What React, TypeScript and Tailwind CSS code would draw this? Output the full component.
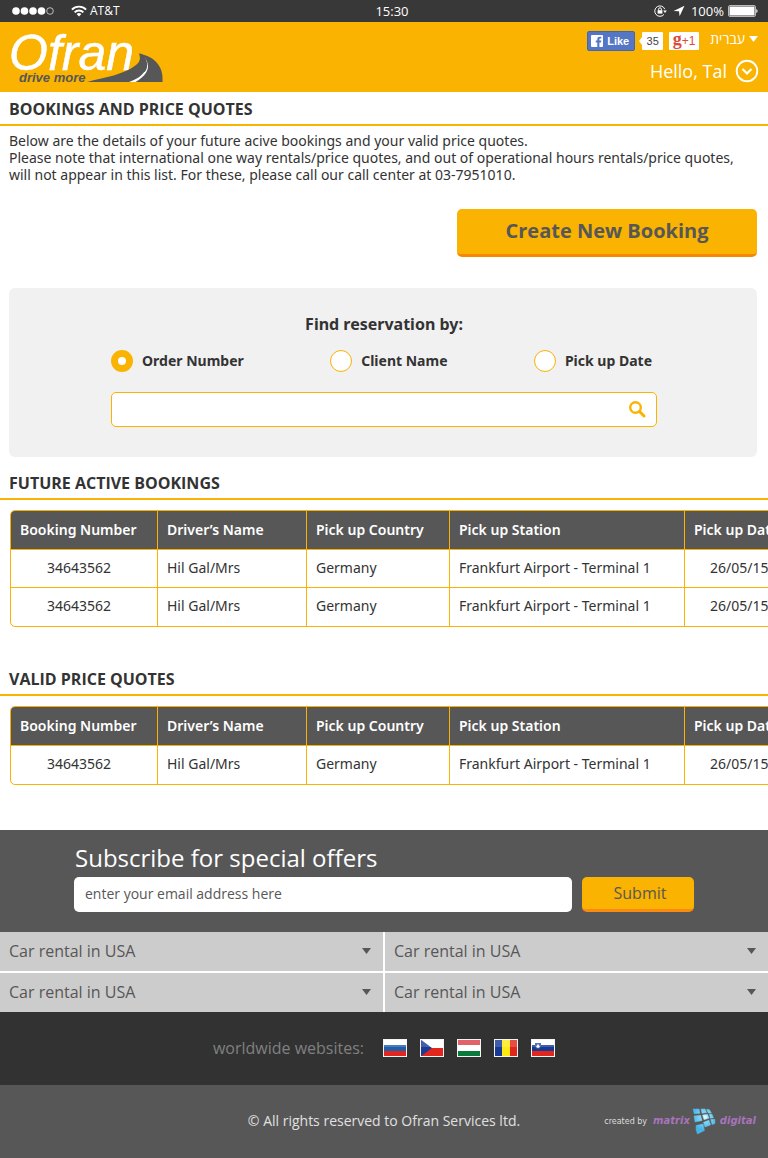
import React from "react";

const headings = ["Booking Number", "Driver’s Name", "Pick up Country", "Pick up Station", "Pick up Date"];
const booking = ["34643562", "Hil Gal/Mrs", "Germany", "Frankfurt Airport - Terminal 1", "26/05/15"];

function StatusBar() {
  return (
    <div className="grid h-[22px] grid-cols-3 items-center bg-[#383838] px-[10px] text-[13px] leading-none text-white">
      <div className="flex items-center pl-[2px]">
        <svg width="43" height="10" viewBox="0 0 43 10" aria-hidden="true">
          <g fill="#fff">
            <circle cx="4" cy="5" r="3.8" />
            <circle cx="12.5" cy="5" r="3.8" />
            <circle cx="21" cy="5" r="3.8" />
            <circle cx="29.5" cy="5" r="3.8" />
          </g>
          <circle cx="38" cy="5" r="3.3" fill="none" stroke="#ddd" strokeWidth="0.8" />
        </svg>
        <svg className="mr-[3px] ml-4" width="16" height="12" viewBox="0 0 16 12" fill="none" stroke="#fff" strokeWidth="1.9" aria-hidden="true">
          <path d="M0.9 4.6a10 10 0 0 1 14.2 0" />
          <path d="M3.6 7.3a6.2 6.2 0 0 1 8.8 0" />
          <path d="M8 11.6 5.6 9.1a3.4 3.4 0 0 1 4.8 0z" fill="#fff" stroke="none" />
        </svg>
        <span className="text-xs">AT&amp;T</span>
      </div>
      <span className="pl-4 text-center">15:30</span>
      <div className="flex items-center justify-end">
        <svg width="13" height="12" viewBox="0 0 13 12" fill="none" stroke="#fff" aria-hidden="true">
          <path d="M10.8 4.2A5.2 5.2 0 1 0 10 9.4" />
          <path d="M9.2 5.6h3.6L11 8z" fill="#fff" stroke="none" />
          <rect x="3.6" y="5.2" width="4.8" height="3.4" fill="#fff" stroke="none" />
          <path d="M4.6 5.4V4.2a1.4 1.4 0 0 1 2.8 0v1.2" />
        </svg>
        <svg className="mr-[6px] ml-[6px]" width="12" height="12" viewBox="0 0 12 12" fill="#fff" aria-hidden="true">
          <path d="M11.5 0.8 6.6 11.2 6 6.2 0.6 6z" />
        </svg>
        <span>100%</span>
        <svg className="ml-1" width="30" height="12" viewBox="0 0 30 12" aria-hidden="true">
          <rect x="0.5" y="0.5" width="27" height="11" rx="1.5" fill="none" stroke="#bbb" />
          <rect x="1.5" y="1.5" width="25" height="9" fill="#fff" />
          <path d="M28.3 4a2.2 2.2 0 0 1 0 4z" fill="#fff" />
        </svg>
      </div>
    </div>
  );
}

function Logo() {
  return (
    <a href="#" aria-label="Ofran drive more">
      <svg className="overflow-visible" width="164" height="60" viewBox="0 0 164 60">
        <text x="9" y="42" fontFamily="Liberation Sans, sans-serif" fontStyle="italic" fontSize="50" fill="#fff" stroke="#fff" strokeWidth="0.5">
          Ofran
        </text>
        <text x="19" y="54" fontFamily="Liberation Sans, sans-serif" fontStyle="italic" fontWeight="700" fontSize="13" fill="#575757">
          drive more
        </text>
        <path d="M87 54C102 50 116 48 128 42c10-5 14-9 11-16.500 1-.3 2 .2 3 .8 13 3 22 13 20.500 27.700z" fill="#575757" />
        <path d="M141.500 27c5 4 7 10 3.500 16-3 4-7 8-16 11h6.500c7-4 12-9 12.500-15 0-5-2-9-6.500-12z" fill="#fff" />
        <path d="M141 26.500c4 3.500 6 8 5 13-.5 2-1.200 3-2 4" fill="none" stroke="#575757" strokeWidth="1.800" />
      </svg>
    </a>
  );
}

function Header() {
  return (
    <header className="flex h-[70px] items-start justify-between bg-[#f9b300] pr-[9px] text-white">
      <div className="pt-[6px]">
        <Logo />
      </div>
      <div className="flex flex-col items-end">
        <div className="flex items-center pt-[9px] pr-px font-['Liberation_Sans',sans-serif]">
          <button className="flex h-5 w-12 items-center gap-1 rounded-[2px] border border-[#4267b2] bg-[#5476c4] pl-[3px] text-[11px] font-bold">
            <svg width="12" height="12" viewBox="0 0 12 12" aria-hidden="true">
              <rect width="12" height="12" rx="1" fill="#fff" />
              <path d="M6.300 12V7.400H4.800V5.400h1.500V4.200C6.300 2.500 7.300 1.700 8.700 1.700h1.600v1.900H9.200c-.6 0-.8.3-.8.8v1h1.900l-.3 2H8.400V12z" fill="#5476c4" />
            </svg>
            Like
          </button>
          <svg className="ml-1" width="3" height="8" viewBox="0 0 3 8" aria-hidden="true">
            <path d="M3 0v8L0 4z" fill="#fff" />
          </svg>
          <span className="flex h-[18px] w-[21px] items-center justify-center rounded-[1px] bg-white text-[11px] text-[#444]">35</span>
          <button className="ml-[6px] flex h-[18px] w-[30px] items-center justify-center rounded-[1px] bg-white text-[#dd4b39]">
            <span className="pb-1 font-['Liberation_Serif',serif] text-lg leading-none font-bold">g</span>
            <span className="text-xs">+1</span>
          </button>
          <button className="ml-[11px] flex items-center gap-1 pb-1 font-['Open_Sans','DejaVu_Sans',sans-serif] text-[14px] leading-4 font-medium">
            <span lang="he">עברית</span>
            <svg width="9" height="6" viewBox="0 0 9 6" aria-hidden="true">
              <path d="M0 0h9L4.500 6z" fill="#fff" />
            </svg>
          </button>
        </div>
        <button className="mt-2 flex items-center gap-2 text-lg leading-6">
          Hello, Tal
          <svg width="24" height="24" viewBox="0 0 24 24" fill="none" stroke="#fff" aria-hidden="true">
            <circle cx="12" cy="12" r="10.300" strokeWidth="1.900" />
            <path d="m7.500 10 4.500 4.500 4.500-4.500" strokeWidth="2.200" />
          </svg>
        </button>
      </div>
    </header>
  );
}

function SectionTitle({ children }: { children: React.ReactNode }) {
  return <h2 className="border-b-2 border-[#f9b300] px-[9px] pt-[6px] pb-1 text-base leading-[22px] font-bold text-[#333]">{children}</h2>;
}

function BookingsTable({ rows, label }: { rows: string[][]; label: string }) {
  return (
    <div className="overflow-x-auto pt-[10px] pl-[10px] [scrollbar-width:none]">
      <table aria-label={label} className="w-[840px] table-fixed border-separate border-spacing-0 overflow-hidden rounded-[5px] border border-[#f9b300] text-left font-['Noto_Sans',sans-serif] text-sm text-[#333]">
        <colgroup>
          <col className="w-[147px]" />
          <col className="w-[149px]" />
          <col className="w-[143px]" />
          <col className="w-[235px]" />
          <col />
        </colgroup>
        <thead>
          <tr>
            {headings.map((h) => (
              <th key={h} className="h-[39px] border-r border-b border-[#f9b300] bg-[#575757] px-[9px] font-semibold whitespace-nowrap text-white last:border-r-0">
                {h}
              </th>
            ))}
          </tr>
        </thead>
        <tbody className="[&>tr:last-child>td]:border-b-0">
          {rows.map((row, r) => (
            <tr key={r}>
              {row.map((cell, c) => (
                <td key={c} className="h-[38px] border-r border-b border-[#f9b300] px-[9px] pb-[2px] whitespace-nowrap first:pl-9 last:border-r-0 last:pl-[25px]">
                  {cell}
                </td>
              ))}
            </tr>
          ))}
        </tbody>
      </table>
    </div>
  );
}

function FindReservation() {
  return (
    <section className="mt-[31px] mr-[11px] ml-[9px] rounded-md bg-[#f1f1f1] pt-6 pr-6 pb-[30px] pl-[26px] font-['Noto_Sans',sans-serif] text-[#333]">
      <h3 className="text-center text-base leading-6 font-bold">Find reservation by:</h3>
      <form className="mx-auto mt-[14px] max-w-[546px]" onSubmit={(e) => e.preventDefault()}>
        <div className="flex justify-between pr-[5px] text-sm leading-[22px] font-bold">
          {["Order Number", "Client Name", "Pick up Date"].map((name, i) => (
            <label key={name} className="flex items-center gap-[9px]">
              <input
                type="radio"
                name="find"
                defaultChecked={i === 0}
                className="size-[22px] appearance-none rounded-full border border-[#f9b300] bg-white checked:border-[7px]"
              />
              {name}
            </label>
          ))}
        </div>
        <div className="mt-5 flex h-[35px] items-center rounded-[5px] border border-[#f9b300] bg-white">
          <input type="text" aria-label="Reservation search" className="min-w-0 flex-1 px-3 text-sm outline-none" />
          <button aria-label="Search" className="mr-[10px]">
            <svg width="17" height="17" viewBox="0 0 17 17" fill="none" stroke="#f9b300" aria-hidden="true">
              <circle cx="6.500" cy="6.500" r="5.300" strokeWidth="2.400" />
              <path d="m10.500 10.500 4.500 4.500" strokeWidth="3" strokeLinecap="round" />
            </svg>
          </button>
        </div>
      </form>
    </section>
  );
}

function Flag({ name, children }: { name: string; children: React.ReactNode }) {
  return (
    <a href="#" aria-label={name}>
      <svg width="24" height="18" viewBox="0 0 24 18">
        {children}
        <path d="M1 1h22v7H1z" fill="#fff" opacity="0.18" />
        <rect x="0.500" y="0.500" width="23" height="17" fill="none" stroke="#f4f4f4" />
      </svg>
    </a>
  );
}

function Flags() {
  return (
    <div className="flex gap-[13px]">
      <Flag name="Russia">
        <path d="M0 0h24v6H0z" fill="#fff" />
        <path d="M0 6h24v6H0z" fill="#1f5fae" />
        <path d="M0 12h24v6H0z" fill="#e0261d" />
      </Flag>
      <Flag name="Czech Republic">
        <path d="M0 0h24v9H0z" fill="#fff" />
        <path d="M0 9h24v9H0z" fill="#e0261d" />
        <path d="m0 0 12 9-12 9z" fill="#1c3c94" />
      </Flag>
      <Flag name="Hungary">
        <path d="M0 0h24v6H0z" fill="#dc4048" />
        <path d="M0 6h24v6H0z" fill="#fff" />
        <path d="M0 12h24v6H0z" fill="#0a7a3c" />
      </Flag>
      <Flag name="Romania">
        <path d="M0 0h8v18H0z" fill="#173b94" />
        <path d="M8 0h8v18H8z" fill="#fdea14" />
        <path d="M16 0h8v18h-8z" fill="#e0261d" />
      </Flag>
      <Flag name="Slovenia">
        <path d="M0 0h24v6H0z" fill="#fff" />
        <path d="M0 6h24v6H0z" fill="#173b94" />
        <path d="M0 12h24v6H0z" fill="#e0261d" />
        <path d="M4 4h6v3c0 2-2 3-3 3s-3-1-3-3z" fill="#38539f" />
        <path d="m7 5 2 3-2 1-2-1z" fill="#fff" />
      </Flag>
    </div>
  );
}

function MatrixMark() {
  return (
    <svg width="24" height="27" viewBox="0 0 24 27" aria-hidden="true">
      <defs>
        <radialGradient id="glow" gradientUnits="userSpaceOnUse" cx="13" cy="9" r="13">
          <stop offset="0" stopColor="#fff" />
          <stop offset="0.25" stopColor="#8fdcf8" />
          <stop offset="1" stopColor="#45b4e8" />
        </radialGradient>
      </defs>
      <g fill="url(#glow)" stroke="url(#glow)" strokeWidth="0.500" strokeLinejoin="round">
        <path d="M1 1h6l.8 4.300-5.600.4z" />
        <path d="m9 1h4l1.600 3.600-4.600.6z" />
        <path d="m14.500 1.300 3 .4 1.800 3.300-3 .1z" />
        <path d="m2 8 6.500-.8 1.500 5.300-7 1.500z" />
        <path d="m10.500 7 5-.8 1.500 4-5 1.500z" />
        <path d="m17.500 6 2.500.2 1.500 3.600-3.200.4z" />
        <path d="m11.500 14.300 5.500-2 1.500 4.700-5.500 2z" />
        <path d="m18.800 11.500 4-.2.200 4.200-3 1z" />
        <path d="m4 17.500 7-1.500 1.500 6.500-7 3.500q-2-4-1.500-8.500z" />
      </g>
    </svg>
  );
}

function Footer() {
  return (
    <footer>
      <form className="bg-[#575757] px-[74px] pt-[11px] pb-5" onSubmit={(e) => e.preventDefault()}>
        <label htmlFor="email" className="block pl-px text-2xl leading-[33px] text-white">
          Subscribe for special offers
        </label>
        <div className="mt-[3px] flex gap-[10px]">
          <input
            id="email"
            type="email"
            placeholder="enter your email address here"
            className="h-[35px] min-w-0 flex-1 rounded-[5px] bg-white px-[11px] pb-[2px] text-sm outline-none placeholder:text-[#575757]"
          />
          <button className="h-[35px] w-28 rounded-[5px] border-b-[3px] border-[#f98a12] bg-[#f9b300] pl-1 text-base text-[#575757]">
            Submit
          </button>
        </div>
      </form>
      <div className="grid grid-cols-2 gap-[2px] bg-white">
        {[0, 1, 2, 3].map((i) => (
          <button key={i} className="flex h-[39px] items-center justify-between bg-[#ccc] pr-3 pb-[2px] pl-[9px] text-base text-[#575757]">
            Car rental in USA
            <svg width="9" height="6" viewBox="0 0 9 6" aria-hidden="true">
              <path d="M0 0h9L4.500 6z" fill="#575757" />
            </svg>
          </button>
        ))}
      </div>
      <div className="flex h-[73px] items-center justify-center gap-[19px] bg-[#323232] pb-[2px] text-base text-[#808080]">
        <span>worldwide websites:</span>
        <Flags />
      </div>
      <div className="grid h-[73px] grid-cols-[1fr_auto_1fr] items-center bg-[#575757] px-3 text-sm text-[#e0e0e0]">
        <p className="col-start-2 pb-[2px]">© All rights reserved to Ofran Services ltd.</p>
        <a href="#" className="flex items-center justify-end font-['DejaVu_Sans',sans-serif]">
          <span className="mr-[6px] text-[8px] text-[#ddd]">created by</span>
          <span className="mr-[2px] text-[10px] font-bold text-[#a874bc] italic">matrix</span>
          <MatrixMark />
          <span className="ml-1 text-[10px] font-bold text-[#a874bc] italic">digital</span>
        </a>
      </div>
    </footer>
  );
}

export default function App() {
  return (
    <div className="min-h-screen overflow-hidden bg-white font-['Open_Sans',sans-serif]">
      <StatusBar />
      <Header />
      <main className="pb-[45px]">
        <SectionTitle>BOOKINGS AND PRICE QUOTES</SectionTitle>
        <p className="px-[9px] pt-[6px] font-['Noto_Sans',sans-serif] text-sm leading-[17px] text-[#333]">
          Below are the details of your future acive bookings and your valid price quotes.
          <br />
          Please note that international one way rentals/price quotes, and out of operational hours rentals/price quotes, will not appear in this list. For these, please call our call center at 03-7951010.
        </p>
        <div className="mt-[26px] flex justify-end pr-[11px]">
          <button className="h-12 w-[300px] rounded-[5px] border-b-[3px] border-[#f98600] bg-[#f9b300] pb-[2px] text-xl font-bold text-[#575757]">
            Create New Booking
          </button>
        </div>
        <FindReservation />
        <div className="mt-[9px]">
          <SectionTitle>FUTURE ACTIVE BOOKINGS</SectionTitle>
          <BookingsTable label="Future active bookings" rows={[booking, booking]} />
        </div>
        <div className="mt-[35px]">
          <SectionTitle>VALID PRICE QUOTES</SectionTitle>
          <BookingsTable label="Valid price quotes" rows={[booking]} />
        </div>
      </main>
      <Footer />
    </div>
  );
}
